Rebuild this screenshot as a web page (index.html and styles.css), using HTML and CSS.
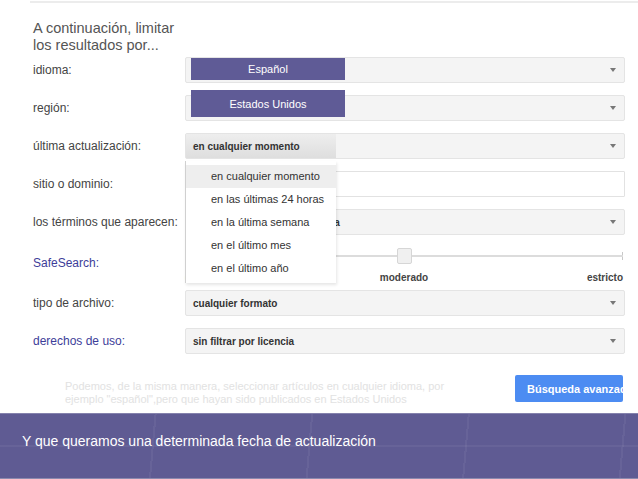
FILE: index.html
```html
<!DOCTYPE html>
<html lang="es">
<head>
<meta charset="utf-8">
<title>Búsqueda avanzada</title>
<link rel="stylesheet" href="styles.css">
</head>
<body>
<div class="topline"></div>
<div class="page">
  <div class="title">A continuación, limitar<br>los resultados por...</div>
  <div class="form">
    <div class="row">
      <div class="label">idioma:</div>
      <div class="select">
        <span class="tag tag-lang">Español</span>
        <span class="arrow"></span>
      </div>
    </div>
    <div class="row">
      <div class="label">región:</div>
      <div class="select">
        <span class="tag tag-region">Estados Unidos</span>
        <span class="arrow"></span>
      </div>
    </div>
    <div class="row">
      <div class="label">última actualización:</div>
      <div class="select open">
        <span class="sel-btn">en cualquier momento</span>
        <span class="arrow"></span>
        <ul class="menu">
          <li class="item active">en cualquier momento</li>
          <li class="item">en las últimas 24 horas</li>
          <li class="item">en la última semana</li>
          <li class="item">en el último mes</li>
          <li class="item">en el último año</li>
        </ul>
      </div>
    </div>
    <div class="row">
      <div class="label">sitio o dominio:</div>
      <div class="input"></div>
    </div>
    <div class="row">
      <div class="label">los términos que aparecen:</div>
      <div class="select">
        <span class="sel-text">en cualquier lugar de la página</span>
        <span class="arrow"></span>
      </div>
    </div>
    <div class="row row-safe">
      <div class="label link">SafeSearch:</div>
      <div class="slider">
        <div class="track"><span class="thumb"></span></div>
        <div class="ticks">
          <span class="t-left">desactivado</span>
          <span class="t-mid">moderado</span>
          <span class="t-right">estricto</span>
        </div>
      </div>
    </div>
    <div class="row">
      <div class="label">tipo de archivo:</div>
      <div class="select">
        <span class="sel-text">cualquier formato</span>
        <span class="arrow"></span>
      </div>
    </div>
    <div class="row">
      <div class="label link">derechos de uso:</div>
      <div class="select">
        <span class="sel-text">sin filtrar por licencia</span>
        <span class="arrow"></span>
      </div>
    </div>
  </div>
  <div class="actions">
    <p class="faint">Podemos, de la misma manera, seleccionar artículos en cualquier idioma, por<br>ejemplo "español",pero que hayan sido publicados en Estados Unidos</p>
    <div class="button"><span>Búsqueda avanzada</span></div>
  </div>
</div>
<div class="band">Y que queramos una determinada fecha de actualización</div>
</body>
</html>
```

FILE: styles.css
```css
html, body {
  margin: 0;
  padding: 0;
}
body {
  width: 638px;
  height: 479px;
  overflow: hidden;
  display: flex;
  flex-direction: column;
  background: #ffffff;
  font-family: "Liberation Sans", Arial, sans-serif;
  color: #444;
}
.topline {
  height: 2px;
  margin: 1px 0 0 30px;
  background: #ececec;
  flex: none;
}
.page {
  padding: 0 13px 0 33px;
  flex: none;
}
.title {
  margin-top: 17px;
  font-size: 14.5px;
  line-height: 17px;
  color: #555;
}
.form {
  margin-top: 3px;
  display: flex;
  flex-direction: column;
  gap: 12px;
}
.row {
  display: grid;
  grid-template-columns: 152px 440px;
  align-items: center;
  height: 26px;
}
.label {
  font-size: 12px;
  color: #444;
}
.label.link {
  color: #3d3d99;
}
.select {
  position: relative;
  box-sizing: border-box;
  height: 26px;
  display: flex;
  align-items: center;
  background: #f4f4f4;
  border: 1px solid #e4e4e4;
  border-radius: 2px;
  font-size: 10px;
  font-weight: bold;
  color: #333;
}
.sel-text {
  padding-left: 7px;
}
.sel-btn {
  align-self: stretch;
  width: 150px;
  box-sizing: border-box;
  padding-left: 7px;
  display: flex;
  align-items: center;
  background: linear-gradient(#eeeeee, #dedede);
}
.arrow {
  margin-left: auto;
  margin-right: 8px;
  width: 0;
  height: 0;
  border-left: 3.5px solid transparent;
  border-right: 3.5px solid transparent;
  border-top: 4px solid #777;
}
.tag {
  position: absolute;
  left: 5px;
  width: 154px;
  background: #5f5b96;
  color: #fff;
  font-weight: normal;
  font-size: 11px;
  display: flex;
  align-items: center;
  justify-content: center;
}
.tag-lang {
  top: 0;
  height: 22px;
}
.tag-region {
  top: -6px;
  height: 27px;
}
.input {
  box-sizing: border-box;
  height: 26px;
  background: #fff;
  border: 1px solid #e2e2e2;
  border-radius: 1px;
}
.menu {
  position: absolute;
  z-index: 5;
  top: 27px;
  left: -1px;
  width: 150px;
  margin: 0;
  padding: 4px 0 3px;
  list-style: none;
  background: #fff;
  border-left: 1px solid #d0d0d0;
  box-shadow: 1px 2px 3px rgba(0, 0, 0, 0.1);
}
.item {
  height: 23px;
  line-height: 23px;
  padding-left: 25px;
  font-size: 11px;
  font-weight: normal;
  color: #333;
  white-space: nowrap;
}
.item.active {
  background: #eeeeee;
}
.row-safe {
  height: 31px;
  align-items: start;
}
.row-safe .label {
  align-self: center;
}
.slider {
  height: 31px;
}
.track {
  height: 17px;
  display: flex;
  align-items: center;
  background:
    linear-gradient(#dcdcdc, #dcdcdc) left center / 100% 2px no-repeat,
    linear-gradient(#c8c8c8, #c8c8c8) right center / 1px 8px no-repeat;
  width: 438px;
}
.thumb {
  margin-left: 212px;
  width: 15px;
  height: 16px;
  box-sizing: border-box;
  background: #f0f0f0;
  border: 1px solid #d6d6d6;
  border-radius: 2px;
}
.ticks {
  width: 438px;
  margin-top: 8px;
  display: grid;
  grid-template-columns: 1fr auto 1fr;
  font-size: 10px;
  line-height: 12px;
  font-weight: bold;
  color: #444;
}
.t-left {
  text-align: left;
  color: #666;
}
.t-mid {
  text-align: center;
}
.t-right {
  text-align: right;
}
.actions {
  margin-top: 21px;
  display: flex;
  justify-content: space-between;
  align-items: flex-start;
}
.faint {
  margin: 5px 0 0 32px;
  font-size: 11px;
  line-height: 13px;
  color: #e2e2e2;
}
.button {
  width: 108px;
  height: 27px;
  margin-right: 2px;
  overflow: hidden;
  box-sizing: border-box;
  padding-left: 12px;
  display: flex;
  align-items: center;
  background: #4c8cf2;
  border-radius: 2px;
  color: #fff;
  font-size: 11px;
  font-weight: bold;
  white-space: nowrap;
}
.band {
  margin-top: auto;
  height: 66px;
  box-sizing: border-box;
  padding: 19px 0 0 22px;
  border-top: 1px solid #8582ad;
  border-bottom: 1px solid #8c8aae;
  background:
    repeating-linear-gradient(95deg, transparent 0 154px, rgba(255, 255, 255, 0.05) 154px 156px),
    linear-gradient(transparent 31px, rgba(255, 255, 255, 0.05) 31px 33px, transparent 33px),
    #5f5b93;
  color: #fff;
  font-size: 14px;
  line-height: 17px;
  flex: none;
}
```
